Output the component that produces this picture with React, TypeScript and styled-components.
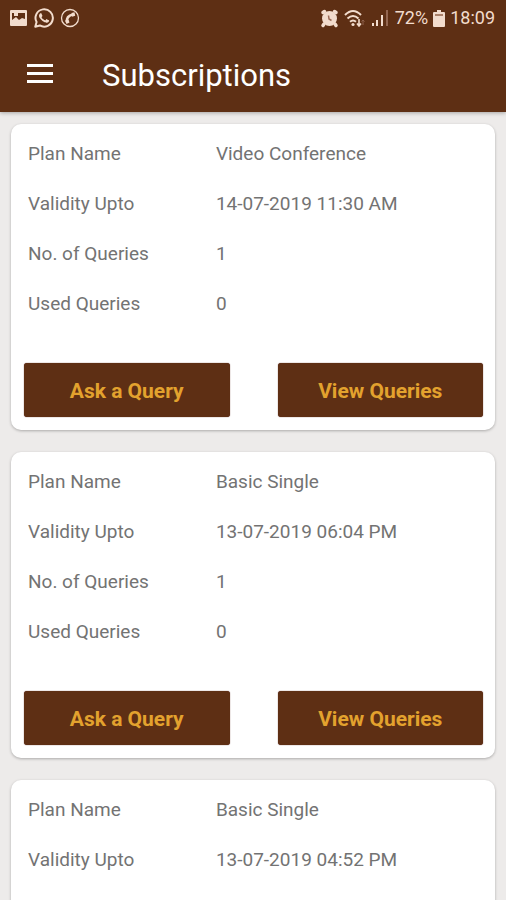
import React from "react";
import styled, { createGlobalStyle } from "styled-components";

const GlobalStyle = createGlobalStyle`
  * { box-sizing: border-box; }
  body { margin: 0; background: #edebea; font-family: Roboto, "Liberation Sans", sans-serif; }
`;

const Screen = styled.div`
  display: flex;
  flex-direction: column;
  height: 100vh;
  overflow: hidden;
`;

const TopArea = styled.div`
  flex: none;
  background: #5e2f14;
  color: #ffffff;
  box-shadow: 0 1px 4px rgba(0, 0, 0, 0.3);
  z-index: 1;
`;

const StatusBar = styled.div`
  display: flex;
  align-items: center;
  justify-content: space-between;
  height: 36px;
  padding: 0 11px 0 9px;
  color: #f2dccd;
  font-size: 18px;
  line-height: 24px;
`;

const StatusGroup = styled.div<{ $gap: number }>`
  display: flex;
  align-items: center;
  gap: ${(p) => p.$gap}px;
  svg { display: block; }
`;

const AppBar = styled.header`
  display: flex;
  align-items: center;
  gap: 48px;
  height: 76px;
  padding: 0 26px;
`;

const MenuButton = styled.button`
  display: flex;
  padding: 0;
  border: 0;
  background: none;
  color: inherit;
  cursor: pointer;
`;

const Title = styled.h1`
  margin: 0;
  padding-top: 4px;
  font-size: 31px;
  font-weight: 400;
  line-height: 40px;
`;

const List = styled.main`
  flex: 1;
  display: flex;
  flex-direction: column;
  gap: 22px;
  padding: 12px 11px;
  overflow-y: auto;
  scrollbar-width: none;
`;

const Card = styled.section`
  flex: none;
  display: flex;
  flex-direction: column;
  justify-content: space-between;
  min-height: 306px;
  padding: 5px 12px 13px 13px;
  border-radius: 10px;
  background: #ffffff;
  box-shadow: 0 1px 3px rgba(0, 0, 0, 0.28);
`;

const Details = styled.dl`
  margin: 0;
  padding: 0 4px;
`;

const Detail = styled.div`
  display: grid;
  grid-template-columns: 5fr 7fr;
  align-items: center;
  height: 50px;
  color: #737373;
  font-size: 19px;
  line-height: 24px;
`;

const Label = styled.dt``;

const Value = styled.dd`
  margin: 0;
`;

const Actions = styled.div`
  display: grid;
  grid-template-columns: 1fr 1fr;
  gap: 48px;
`;

const ActionButton = styled.button`
  height: 54px;
  padding: 2px 0 0;
  border: 0;
  border-radius: 3px;
  background: #5e2f14;
  box-shadow: 0 0 1px #4a0f08;
  color: #e3a22e;
  font-family: inherit;
  font-size: 21px;
  font-weight: 700;
  line-height: 24px;
  cursor: pointer;
`;

const PictureIcon = () => (
  <svg width="19" height="18" viewBox="0 0 19 18" aria-hidden="true">
    <path fill="currentColor" fillRule="evenodd" d="M2 1h15q1 0 1 1v14q0 1-1 1H2q-1 0-1-1V2q0-1 1-1zM3 4v7l4-3 3 3 3-2 3 1V4z" />
    <path d="M5 4h4v3H5z" fill="currentColor" />
  </svg>
);

const WhatsAppIcon = () => (
  <svg width="20" height="20" viewBox="0 0 24 24" fill="currentColor" aria-hidden="true">
    <path d="M17.472 14.382c-.297-.149-1.758-.867-2.030-.967-.273-.099-.471-.148-.670.150-.197.297-.767.966-.940 1.164-.173.199-.347.223-.644.075-.297-.150-1.255-.463-2.390-1.475-.883-.788-1.480-1.761-1.653-2.059-.173-.297-.018-.458.130-.606.134-.133.298-.347.446-.520.149-.174.198-.298.298-.497.099-.198.050-.371-.025-.520-.075-.149-.669-1.612-.916-2.207-.242-.579-.487-.500-.669-.510l-.570-.010c-.198 0-.520.074-.792.372-.272.297-1.040 1.016-1.040 2.479s1.065 2.875 1.213 3.074c.149.198 2.096 3.200 5.077 4.487 2.981 1.287 2.981.858 3.519.804.538-.054 1.758-.719 2.006-1.413.248-.694.248-1.289.173-1.413-.074-.124-.272-.198-.570-.347z" />
    <path fill="none" stroke="currentColor" strokeWidth="2.400" strokeLinejoin="round" d="M1.500 22.500l1.600-5.600a10.400 10.400 0 1 1 3.900 4z" />
  </svg>
);

const CallIcon = () => (
  <svg width="20" height="20" viewBox="0 0 20 20" aria-hidden="true">
    <circle cx="10" cy="10" r="8.500" fill="none" stroke="currentColor" strokeWidth="1.300" />
    <path d="M7 14Q6 8 13 6.500" fill="none" stroke="currentColor" strokeWidth="2.400" />
    <path d="M5 12.500l3.500-1 1 3-3 1.500zM11.500 5l3-.8.7 3.600-3 1z" fill="currentColor" />
  </svg>
);

const AlarmIcon = () => (
  <svg width="19" height="19" viewBox="0 0 19 19" aria-hidden="true">
    <circle cx="9.500" cy="9.500" r="7.500" fill="currentColor" />
    <path d="M3 3.500l1.500-1M16 3.500l-1.500-1M4 15l-1 1.500M15 15l1 1.500" stroke="currentColor" strokeWidth="3.500" strokeLinecap="round" />
    <path d="M8.500 6.500l.5 3.500 2.500 1.500" fill="none" stroke="#9b6c58" strokeWidth="1.500" />
  </svg>
);

const WifiIcon = () => (
  <svg width="22" height="18" viewBox="0 0 22 18" aria-hidden="true">
    <path d="M1 6Q9-2 17 6M3.500 9.500q5.500-5 11 0M6 12.800q3-2.500 6 0" fill="none" stroke="currentColor" strokeWidth="2" />
    <circle cx="9" cy="15.500" r="1.600" fill="currentColor" />
    <path d="M15 10v7M13 14.500L15 17l2-2.500" fill="none" stroke="currentColor" strokeWidth="1.600" />
    <path d="M19 16v-5M17.500 12.500L19 11l1.500 1.500" fill="none" stroke="#8d604a" strokeWidth="1" />
  </svg>
);

const SignalIcon = () => (
  <svg width="19" height="18" viewBox="0 0 19 18" aria-hidden="true">
    <path d="M1 14h2v3H1zM5 11h2v6H5zM10 6h2v11h-2z" fill="currentColor" />
    <path d="M15 1h2v16h-2z" fill="#936650" />
  </svg>
);

const BatteryIcon = () => (
  <svg width="12" height="19" viewBox="0 0 12 19" aria-hidden="true">
    <path fill="currentColor" d="M4 1h4v2h3q1 0 1 1v13q0 1-1 1H1q-1 0-1-1V4q0-1 1-1h3z" />
    <path fill="#aa8069" d="M2 5h8v2H2z" />
  </svg>
);

const MenuIcon = () => (
  <svg width="28" height="22" viewBox="0 0 28 22" aria-hidden="true">
    <path fill="currentColor" d="M1 1h26v3H1zM1 9h26v3H1zM1 17h26v3H1z" />
  </svg>
);

type Plan = { details: [string, string][]; actions: string[] };

const plans: Plan[] = [
  {
    details: [
      ["Plan Name", "Video Conference"],
      ["Validity Upto", "14-07-2019 11:30 AM"],
      ["No. of Queries", "1"],
      ["Used Queries", "0"],
    ],
    actions: ["Ask a Query", "View Queries"],
  },
  {
    details: [
      ["Plan Name", "Basic Single"],
      ["Validity Upto", "13-07-2019 06:04 PM"],
      ["No. of Queries", "1"],
      ["Used Queries", "0"],
    ],
    actions: ["Ask a Query", "View Queries"],
  },
  {
    details: [
      ["Plan Name", "Basic Single"],
      ["Validity Upto", "13-07-2019 04:52 PM"],
    ],
    actions: [],
  },
];

export default function App() {
  return (
    <Screen>
      <GlobalStyle />
      <TopArea>
        <StatusBar>
          <StatusGroup $gap={6}>
            <PictureIcon />
            <WhatsAppIcon />
            <CallIcon />
          </StatusGroup>
          <StatusGroup $gap={5}>
            <AlarmIcon />
            <WifiIcon />
            <SignalIcon />
            <span>72%</span>
            <BatteryIcon />
            <time>18:09</time>
          </StatusGroup>
        </StatusBar>
        <AppBar>
          <MenuButton type="button" aria-label="Menu">
            <MenuIcon />
          </MenuButton>
          <Title>Subscriptions</Title>
        </AppBar>
      </TopArea>
      <List>
        {plans.map((plan, index) => (
          <Card key={index}>
            <Details>
              {plan.details.map(([label, value]) => (
                <Detail key={label}>
                  <Label>{label}</Label>
                  <Value>{value}</Value>
                </Detail>
              ))}
            </Details>
            {plan.actions.length > 0 && (
              <Actions>
                {plan.actions.map((action) => (
                  <ActionButton key={action} type="button">
                    {action}
                  </ActionButton>
                ))}
              </Actions>
            )}
          </Card>
        ))}
      </List>
    </Screen>
  );
}
